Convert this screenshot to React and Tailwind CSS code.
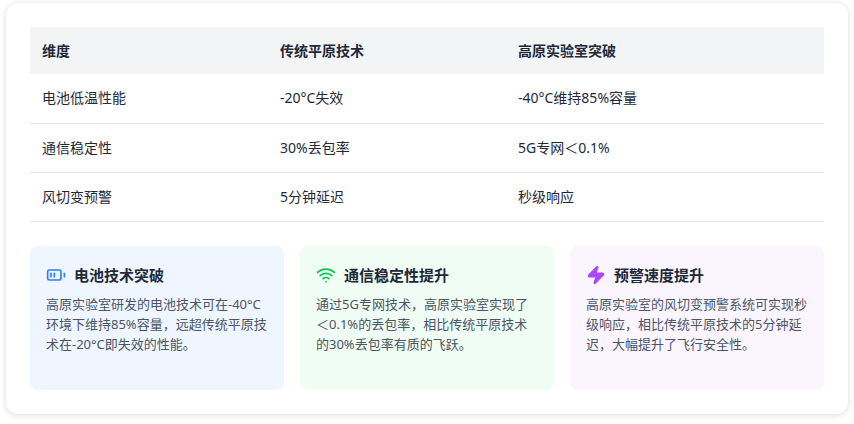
import { BatteryMedium, Wifi, Zap } from 'lucide-react'

const rows = [
  ['电池低温性能', '-20°C失效', '-40°C维持85%容量'],
  ['通信稳定性', '30%丢包率', '5G专网＜0.1%'],
  ['风切变预警', '5分钟延迟', '秒级响应'],
]

const cards = [
  { icon: <BatteryMedium className="w-5 h-5 text-blue-500" />, bg: 'bg-blue-50', title: '电池技术突破', text: '高原实验室研发的电池技术可在-40°C环境下维持85%容量，远超传统平原技术在-20°C即失效的性能。' },
  { icon: <Wifi className="w-5 h-5 text-green-500" />, bg: 'bg-green-50', title: '通信稳定性提升', text: '通过5G专网技术，高原实验室实现了＜0.1%的丢包率，相比传统平原技术的30%丢包率有质的飞跃。' },
  { icon: <Zap className="w-5 h-5 text-purple-500 fill-purple-500" />, bg: 'bg-purple-50', title: '预警速度提升', text: '高原实验室的风切变预警系统可实现秒级响应，相比传统平原技术的5分钟延迟，大幅提升了飞行安全性。' },
]

export default function App() {
  return (
    <div className="bg-white p-[6px] pt-[3px] h-[424px]" style={{ fontFamily: '"Noto Sans", "Noto Sans CJK SC", sans-serif' }}>
      <div className="rounded-xl bg-white shadow-[0_1px_6px_rgba(0,0,0,0.15)] p-6 h-[411px]">
        <table className="w-full text-sm text-gray-800 border-collapse">
          <thead>
            <tr className="bg-gray-100 h-[47px]">
              <th className="text-left font-bold px-3 w-[238px]">维度</th>
              <th className="text-left font-bold px-3 w-[238px]">传统平原技术</th>
              <th className="text-left font-bold px-3">高原实验室突破</th>
            </tr>
          </thead>
          <tbody>
            {rows.map((r, i) => (
              <tr key={i} className="h-[49px] border-b border-gray-200">
                {r.map((c, j) => <td key={j} className="px-3">{c}</td>)}
              </tr>
            ))}
          </tbody>
        </table>
        <div className="grid grid-cols-3 gap-4 mt-6">
          {cards.map((c, i) => (
            <div key={i} className={`${c.bg} rounded-lg p-4 h-[144px]`}>
              <div className="flex items-center gap-2 mb-2 mt-0.5">
                {c.icon}
                <span className="font-bold text-[15px] text-gray-800">{c.title}</span>
              </div>
              <p className="text-[13px] leading-[20px] text-gray-600">{c.text}</p>
            </div>
          ))}
        </div>
      </div>
    </div>
  )
}
